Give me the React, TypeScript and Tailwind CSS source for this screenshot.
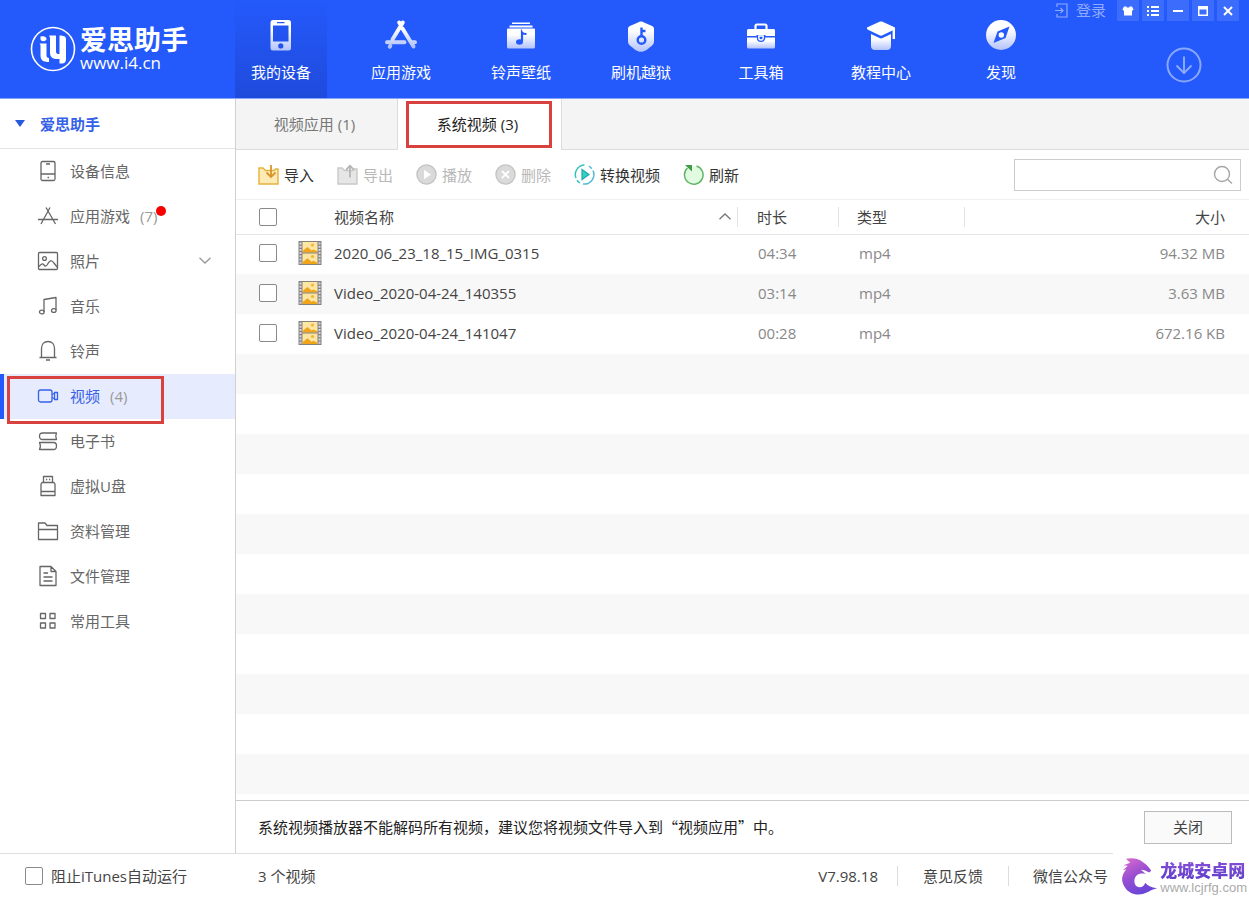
import React from 'react';
import clsx from 'clsx';

type IconProps = { className?: string };

/* ---------- header icons (white fading to light blue) ---------- */

const NavSvg = ({ children }: { children: React.ReactNode }) => (
  <svg viewBox="0 0 34 34" className="size-[34px]" fill="none" aria-hidden="true">
    {children}
  </svg>
);

const DeviceIcon = () => (
  <NavSvg>
    <path
      fillRule="evenodd"
      fill="url(#navFade)"
      d="M9 2h15.500a2.500 2.500 0 0 1 2.500 2.500v25.500a2.500 2.500 0 0 1-2.500 2.500H9a2.500 2.500 0 0 1-2.500-2.500V4.500A2.500 2.500 0 0 1 9 2zM9 7.500v16h15.500v-16zM16.800 25.300a2.600 2.600 0 1 0 0 5.200a2.600 2.600 0 1 0 0-5.200zM13 4v1.300h7.500V4z"
    />
  </NavSvg>
);

const AppsIcon = () => (
  <NavSvg>
    <g stroke="url(#navFadeStroke)" strokeWidth="4" strokeLinecap="round">
      <path d="M18.800 4.500L8.500 21.500M15.200 4.500L17 7.500M18.500 10.500L29.500 28.500M6.300 28l-.5.800M3 24.200H20.500M28 24.200h3" />
    </g>
  </NavSvg>
);

const RingtoneIcon = () => (
  <NavSvg>
    <path fill="#fff" d="M8 4.500h18V6H8zM5.500 7.500h23v2h-23z" />
    <path fill="url(#navFade)" d="M4 10.500h26a1 1 0 0 1 1 1V29a1.500 1.500 0 0 1-1.500 1.500h-25A1.500 1.500 0 0 1 3 29V11.500a1 1 0 0 1 1-1z" />
    <path d="M18 23.500V14.500c1 1.600 2.300 1.500 4.500 1.500" stroke="#2459fb" strokeWidth="2.200" />
    <ellipse cx="15.500" cy="24" rx="3.500" ry="2.800" fill="#2459fb" />
  </NavSvg>
);

const ShieldIcon = () => (
  <NavSvg>
    <path
      fill="url(#navFade)"
      d="M17 3.500c1 0 1.700.4 3 1l7.500 3.200c1.600.7 2.500 1.500 2.500 3.300v12c0 2.500-1 4-3 5.500-3 2.200-6 5.300-10 5.300s-7-3.100-10-5.300c-2-1.500-3-3-3-5.500V11c0-1.800.9-2.600 2.500-3.300L14 4.500c1.300-.6 2-1 3-1z"
    />
    <circle cx="17.500" cy="22" r="3.800" stroke="#2459fb" strokeWidth="2.400" />
    <path d="M17.500 18.500V9.500M17.500 13h4" stroke="#2459fb" strokeWidth="2.400" />
  </NavSvg>
);

const ToolboxIcon = () => (
  <NavSvg>
    <path d="M11.500 11V8a1.500 1.500 0 0 1 1.500-1.500h8a1.500 1.500 0 0 1 1.500 1.500v3" stroke="#fff" strokeWidth="2.200" />
    <path fill="#fff" d="M4.500 11h25a1.500 1.500 0 0 1 1.500 1.500V18h-9.500v-1h-9v1H3v-5.500A1.500 1.500 0 0 1 4.500 11z" />
    <path fill="url(#navFade)" d="M3 19.500h9.800c0 3 1.500 4.500 4.200 4.500s4.200-1.500 4.200-4.500H31V29a1.500 1.500 0 0 1-1.500 1.500h-25A1.500 1.500 0 0 1 3 29z" />
    <path d="M14.800 18h4.400v1.800a2.200 2.200 0 0 1-4.400 0z" stroke="#fff" strokeWidth="1.400" />
  </NavSvg>
);

const CourseIcon = () => (
  <NavSvg>
    <path
      fill="#fff"
      d="M15.500 3.800c1-.4 2-.4 3 0L30 9c1.500.7 1.500 2 0 2.800l-11.500 5.500c-1 .5-2 .5-3 0L4 11.800C2.500 11 2.500 9.700 4 9z"
    />
    <path fill="url(#navFade)" d="M7 16l8.500 4c1 .5 2 .5 3 0l8.500-4v12c0 2.500-1.500 4-4 4H11c-2.500 0-4-1.500-4-4z" />
    <path d="M29.800 11v10" stroke="#fff" strokeWidth="2.400" />
  </NavSvg>
);

const DiscoverIcon = () => (
  <NavSvg>
    <circle cx="17" cy="17" r="15" fill="url(#navFade)" />
    <path fill="#2459fb" d="M25.500 8.500l-4 11.500L9.500 25l4-11.500z" />
    <circle cx="17.300" cy="17" r="2.700" fill="#fff" />
  </NavSvg>
);

/* ---------- sidebar icons ---------- */

const LineSvg = ({ children }: { children: React.ReactNode }) => (
  <svg
    viewBox="0 0 22 22"
    className="size-[22px] shrink-0"
    fill="none"
    stroke="currentColor"
    strokeWidth="1.300"
    strokeLinejoin="round"
    aria-hidden="true"
  >
    {children}
  </svg>
);

const InfoLine = () => (
  <LineSvg>
    <rect x="4" y="1.500" width="14" height="19" rx="1.500" />
    <path d="M4 14h14M9 4h4M10.500 17.500h1.500" />
  </LineSvg>
);
const AppsLine = () => (
  <LineSvg>
    <path d="M13 2.500L4 19M9 2.500L18.500 19M1 14.500h20" />
  </LineSvg>
);
const PhotoLine = () => (
  <LineSvg>
    <rect x="1.500" y="2.500" width="19" height="17" rx="1" />
    <circle cx="7.500" cy="8.500" r="1.900" />
    <path d="M2 16.500c2-2.500 3.500-3.500 5-1.500 1 1.300 2 1.500 3 0 2.500-4.500 4.500-5.500 6.500-2.500l4 5" />
  </LineSvg>
);
const MusicLine = () => (
  <LineSvg>
    <path d="M7 17V4.500L19 2.500V15" />
    <ellipse cx="4.800" cy="17" rx="2.300" ry="1.900" />
    <ellipse cx="16.800" cy="15.500" rx="2.300" ry="1.900" />
  </LineSvg>
);
const BellLine = () => (
  <LineSvg>
    <path d="M2.500 17.500h17M4.500 17.500V8.500c0-4 2.500-7 6.500-7s6.500 3 6.500 7v9M9 20h4" />
  </LineSvg>
);
const VideoLine = () => (
  <LineSvg>
    <rect x="1.500" y="5" width="13.500" height="12" rx="2" />
    <path d="M15 9.500l2-1M15 12.500l2 1M17.500 7.500h3v7h-3z" />
  </LineSvg>
);
const BookLine = () => (
  <LineSvg>
    <path d="M19.500 3H5.500C3.500 3 2.500 4 2.500 6s1 3.500 3 3.500h14c-1-2-1-4.500 0-6.500zM2.500 12.500h14c2 0 3 1 3 3.500s-1 3.500-3 3.500h-14c1-2 1-5 0-7z" />
  </LineSvg>
);
const UsbLine = () => (
  <LineSvg>
    <path d="M6.500 7.500v-6h9v6M9 4.500h1.200M12 4.500h1.200" />
    <path d="M5 7.500h12l1 1.500v11.500H4V9zM4 16.500h14" />
  </LineSvg>
);
const FolderLine = () => (
  <LineSvg>
    <path d="M1.500 19.500v-16.500h6.500l2 2.500h10.500v14zM1.500 9.500h19" />
  </LineSvg>
);
const FileLine = () => (
  <LineSvg>
    <path d="M3 1.500h11l5 5v14H3zM14 1.500v5h5M6.500 8h4.500M6.500 12h9M6.500 16h9" />
  </LineSvg>
);
const GridLine = () => (
  <LineSvg>
    <rect x="3.500" y="3.500" width="5" height="5" />
    <rect x="13" y="3.500" width="5" height="5" />
    <rect x="3.500" y="13" width="5" height="5" />
    <rect x="13" y="13" width="5" height="5" />
  </LineSvg>
);

/* ---------- toolbar icons ---------- */

const TrayIcon = ({ up, stroke, fill, arrow }: { up?: boolean; stroke: string; fill: string; arrow: string }) => (
  <svg viewBox="0 0 21 21" className="size-[21px]" fill="none" aria-hidden="true">
    <path d="M1 20V4h4l2.500 2.500H16L17.500 5H20v15z" fill={fill} stroke={stroke} strokeWidth="1.400" />
    {up ? (
      <path d="M13 13.500V2M9 5.800l4-4 4 4" stroke={arrow} strokeWidth="1.700" />
    ) : (
      <path d="M13 1v12M8.500 8.500L13 13l4.500-4.500" stroke={arrow} strokeWidth="1.800" />
    )}
  </svg>
);

const ImportIcon = () => <TrayIcon stroke="#e5b23c" fill="#fdeab4" arrow="#d9952a" />;
const ExportIcon = () => <TrayIcon up stroke="#c8c8c8" fill="#e6e6e6" arrow="#b4b4b4" />;

const PlayIcon = () => (
  <svg viewBox="0 0 21 21" className="size-[21px]" aria-hidden="true">
    <circle cx="10.500" cy="10.500" r="9.600" fill="#dadada" stroke="#c2c2c2" strokeWidth="1.300" />
    <path d="M8 5.800l7 4.700-7 4.700z" fill="#fff" />
  </svg>
);

const RemoveIcon = () => (
  <svg viewBox="0 0 21 21" className="size-[21px]" aria-hidden="true">
    <circle cx="10.500" cy="10.500" r="9.600" fill="#dadada" stroke="#c2c2c2" strokeWidth="1.300" />
    <path d="M7 7l7 7M14 7l-7 7" stroke="#fff" strokeWidth="1.800" />
  </svg>
);

const ConvertIcon = () => (
  <svg viewBox="0 0 21 21" className="size-[21px]" fill="none" aria-hidden="true">
    <path d="M10.500 1A9.500 9.500 0 0 0 2 14M3 16.200a9.500 9.500 0 0 0 3 2.700" stroke="#35c3bd" strokeWidth="1.500" />
    <path d="M9 19.900A9.500 9.500 0 0 0 19 6.500M17.800 4.700a9.500 9.500 0 0 0-3-2.600" stroke="#58bcd8" strokeWidth="1.500" />
    <path d="M8 5.500l7 5-7 5z" fill="#35d0bf" stroke="#1fa8b4" strokeWidth="1.200" />
  </svg>
);

const RefreshIcon = () => (
  <svg viewBox="0 0 21 21" className="size-[21px]" fill="none" aria-hidden="true">
    <circle cx="10.500" cy="11" r="9" fill="#e0fbe0" />
    <path d="M13.500 2a9.300 9.300 0 1 1-9 2" stroke="#62b568" strokeWidth="1.500" />
    <path d="M2 1h7v6.500z" fill="#3f9c47" />
  </svg>
);

const FilmIcon = () => (
  <svg viewBox="0 0 24 24" className="size-6" aria-hidden="true">
    <rect x="0.500" y="0" width="23" height="24" fill="#85827c" />
    <path d="M2.500 1.500v22M21.500 1.500v22" stroke="#d4d4ea" strokeWidth="2" strokeDasharray="2 1.200" />
    <rect x="4.500" y="1" width="15" height="10.300" fill="#fde6a2" />
    <rect x="4.500" y="12.500" width="15" height="10.500" fill="#fde6a2" />
    <path d="M4.500 11.300V10l5-4 4 3.500 2-1 4 2v.8zM4.500 23v-1.800l5-4 4 3.500 2-1 4 2V23z" fill="#f0a41c" />
    <circle cx="14.500" cy="4" r="1.600" fill="#f4b53a" />
    <circle cx="14.500" cy="15.500" r="1.600" fill="#f4b53a" />
  </svg>
);

const SearchIcon = () => (
  <svg viewBox="0 0 20 20" className="size-5" fill="none" stroke="#a5a5a5" strokeWidth="1.400" aria-hidden="true">
    <circle cx="9" cy="9" r="7.500" />
    <path d="M14.300 14.300L19 18.500" />
  </svg>
);

const Chevron = ({ className }: IconProps) => (
  <svg viewBox="0 0 12 7" className={clsx('h-[7px] w-3', className)} fill="none" stroke="currentColor" strokeWidth="1.300" aria-hidden="true">
    <path d="M.5.800L6 6 11.500.800" />
  </svg>
);

const BrandMark = () => (
  <svg viewBox="0 0 46 46" className="size-[46px]" fill="none" aria-hidden="true">
    <circle cx="23" cy="23" r="21.500" stroke="#fff" strokeWidth="1.600" />
    <path fill="#fff" d="M10.500 10.500c3-.8 6-.3 6 2.500s-6 3-6 0z" />
    <path
      fill="#fff"
      d="M9.500 17.500h7v12c0 1.500.8 2.500 2.500 2.500v4c-6 0-8.500-2-8.500-6.500v-9.500c0-1.200-.3-2-1-2.500zM19 9.500h7v16c0 1.500.8 2.500 2 2.500h1.500V9.500c4.500 0 6.500 1 6.500 3.500v20c0 3-1.500 4.500-4 4.500h-2.500V33H27c-4.500 0-7-2-7-6.500V13c0-1.500-.2-2.500-1-3.500z"
    />
  </svg>
);

/* ---------- data ---------- */

const navItems = [
  { label: '我的设备', Icon: DeviceIcon, active: true },
  { label: '应用游戏', Icon: AppsIcon },
  { label: '铃声壁纸', Icon: RingtoneIcon },
  { label: '刷机越狱', Icon: ShieldIcon },
  { label: '工具箱', Icon: ToolboxIcon },
  { label: '教程中心', Icon: CourseIcon },
  { label: '发现', Icon: DiscoverIcon },
];

const sideItems = [
  { label: '设备信息', Icon: InfoLine },
  { label: '应用游戏', Icon: AppsLine, count: 7, dot: true },
  { label: '照片', Icon: PhotoLine, expandable: true },
  { label: '音乐', Icon: MusicLine },
  { label: '铃声', Icon: BellLine },
  { label: '视频', Icon: VideoLine, count: 4, active: true },
  { label: '电子书', Icon: BookLine },
  { label: '虚拟U盘', Icon: UsbLine },
  { label: '资料管理', Icon: FolderLine },
  { label: '文件管理', Icon: FileLine },
  { label: '常用工具', Icon: GridLine },
];

const tools = [
  { label: '导入', Icon: ImportIcon },
  { label: '导出', Icon: ExportIcon, disabled: true },
  { label: '播放', Icon: PlayIcon, disabled: true },
  { label: '删除', Icon: RemoveIcon, disabled: true },
  { label: '转换视频', Icon: ConvertIcon },
  { label: '刷新', Icon: RefreshIcon },
];

const videos = [
  { name: '2020_06_23_18_15_IMG_0315', duration: '04:34', type: 'mp4', size: '94.32 MB' },
  { name: 'Video_2020-04-24_140355', duration: '03:14', type: 'mp4', size: '3.63 MB' },
  { name: 'Video_2020-04-24_141047', duration: '00:28', type: 'mp4', size: '672.16 KB' },
];

const windowButtons = [
  { label: '皮肤', d: 'M3 2.500h2.200a2 2 0 0 0 3.600 0H11l1.500 3-1.500 1.500v4.500H3V7L1.500 5.500z', filled: true },
  { label: '菜单', d: 'M1 3h2M5 3h8M1 7h2M5 7h8M1 11h2M5 11h8' },
  { label: '最小化', d: 'M2 7h10' },
  { label: '最大化', d: 'M2 2h10v10H2zM3.500 5.500v5h7v-5z', filled: true },
  { label: '关闭窗口', d: 'M3 3l8 8M11 3l-8 8' },
];

/* ---------- parts ---------- */

const Checkbox = ({ label, id }: { label: string; id?: string }) => (
  <input
    type="checkbox"
    id={id}
    aria-label={id ? undefined : label}
    className="block size-[18px] shrink-0 appearance-none rounded-[2px] border border-[#8a8a8a] bg-white checked:bg-[#2459fb]"
  />
);

const Header = () => (
  <header className="flex h-[99px] shrink-0 border-b border-[#86a3fb] bg-[#2459fb] text-white">
    <svg className="absolute size-0" aria-hidden="true">
      <defs>
        <linearGradient id="navFade" x1="0" y1="0" x2="0" y2="1">
          <stop offset="0.300" stopColor="#fff" />
          <stop offset="1" stopColor="#b3c3fc" />
        </linearGradient>
        <linearGradient id="navFadeStroke" gradientUnits="userSpaceOnUse" x1="0" y1="2" x2="0" y2="32">
          <stop offset="0.300" stopColor="#fff" />
          <stop offset="1" stopColor="#a3b7fc" />
        </linearGradient>
      </defs>
    </svg>

    <a href="#home" className="flex w-[235px] shrink-0 items-center gap-1 pl-[30px]">
      <BrandMark />
      <span className="flex flex-col">
        <span className="text-[27px] leading-[28px] font-bold">爱思助手</span>
        <span className="text-[17px] leading-[18px]">www.i4.cn</span>
      </span>
    </a>

    <nav className="flex gap-7">
      {navItems.map(({ label, Icon, active }) => (
        <a
          key={label}
          href={`#${label}`}
          className={clsx(
            'flex w-[92px] flex-col items-center gap-2 pt-[18px] leading-6',
            active && 'bg-linear-to-b from-[#2459fb] to-[#1f4bdc]',
          )}
        >
          <Icon />
          {label}
        </a>
      ))}
    </nav>

    <div className="ml-auto flex flex-col items-end gap-[26px] pr-2.5">
      <div className="flex items-center gap-[3px]">
        <button type="button" className="mr-2 flex items-center gap-2 text-[#8fabff]">
          <svg viewBox="0 0 13 15" className="h-[15px] w-[13px]" fill="none" stroke="currentColor" strokeWidth="1.200" aria-hidden="true">
            <path d="M2 4V1h10v13H2v-3M0 7.500h8M5.500 5L8 7.500 5.500 10" />
          </svg>
          <span className="leading-[21px]">登录</span>
        </button>
        {windowButtons.map(({ label, d, filled }) => (
          <button key={label} type="button" aria-label={label} className="flex h-[21px] w-[22px] items-center justify-center bg-[#3c6cfc]">
            <svg
              viewBox="0 0 14 14"
              className="size-3.5"
              fill={filled ? 'currentColor' : 'none'}
              fillRule="evenodd"
              stroke="currentColor"
              strokeWidth={filled ? 0 : 2}
              aria-hidden="true"
            >
              <path d={d} />
            </svg>
          </button>
        ))}
      </div>
      <button type="button" aria-label="下载" className="mr-[37px] text-[#8aa8fe]">
        <svg viewBox="0 0 36 36" className="size-9" fill="none" stroke="currentColor" strokeWidth="2" aria-hidden="true">
          <circle cx="18" cy="18" r="16.500" />
          <path d="M18 9.500v16M10.500 18.500l7.500 7.500 7.500-7.500" />
        </svg>
      </button>
    </div>
  </header>
);

const Sidebar = () => (
  <aside className="w-[236px] shrink-0 border-r border-[#d0d0d0]">
    <button type="button" className="flex h-[50px] w-full items-center gap-[15px] border-b border-[#e4e4e4] pl-[15px] font-bold text-[#3561e8]">
      <svg viewBox="0 0 10 7" className="h-[7px] w-2.5" fill="#2459e0" aria-hidden="true">
        <path d="M0 0h10L5 7z" />
      </svg>
      爱思助手
    </button>
    <nav>
      {sideItems.map(({ label, Icon, count, dot, expandable, active }) => (
        <a
          key={label}
          href={`#side-${label}`}
          className={clsx(
            'relative flex h-[45px] items-center border-l-4 pb-0.5 pl-[33px]',
            active ? 'border-[#2459fb] bg-[#e7ebfe] text-[#3561e8]' : 'border-transparent text-[#666]',
          )}
        >
          <Icon />
          <span className="ml-[11px]">{label}</span>
          {count && <span className="ml-2.5 text-[#999]">({count})</span>}
          {dot && <span className="-ml-px mb-2.5 size-2.5 rounded-full bg-[#f80000]" />}
          {expandable && <Chevron className="mr-6 ml-auto text-[#999]" />}
          {active && <span className="absolute top-0.5 left-[3px] h-12 w-[157px] border-3 border-[#d9413f]" />}
        </a>
      ))}
    </nav>
  </aside>
);

const Tabs = () => (
  <div role="tablist" className="flex h-[51px] shrink-0">
    <button type="button" role="tab" aria-selected="false" className="w-[162px] border-r border-b border-[#dcdcdc] bg-[#f4f4f4] pr-1 text-[#777]">
      视频应用 (1)
    </button>
    <button type="button" role="tab" aria-selected="true" className="relative w-[163px] pr-1 pb-0.5 text-[#222]">
      系统视频 (3)
      <span className="absolute top-0.5 left-2 h-[47px] w-[146px] border-3 border-[#d9413f]" />
    </button>
    <div className="flex-1 border-b border-l border-[#dcdcdc] bg-[#f4f4f4]" />
  </div>
);

const Toolbar = () => (
  <div className="flex h-[50px] shrink-0 items-center gap-[23px] border-b border-[#f0f0f0] pr-2 pl-[22px]">
    {tools.map(({ label, Icon, disabled }) => (
      <button
        key={label}
        type="button"
        disabled={disabled}
        className={clsx('flex items-center gap-[5px] whitespace-nowrap', disabled ? 'text-[#b8b8b8]' : 'text-[#333]')}
      >
        <Icon />
        {label}
      </button>
    ))}
    <label className="ml-auto flex h-8 w-[227px] items-center border border-[#ccc] pr-[7px]">
      <input type="text" aria-label="搜索" className="h-full min-w-0 flex-1 px-2 outline-none" />
      <SearchIcon />
    </label>
  </div>
);

const VideoTable = () => (
  <table className="w-full table-fixed text-left">
    <thead>
      <tr className="h-[34px] border-b border-[#e6e6e6] text-[#444]">
        <th className="w-[62px] pl-[23px]">
          <Checkbox label="全选" />
        </th>
        <th className="p-0 font-normal">
          <div className="flex h-5 items-center justify-between border-r border-[#e2e2e2] pr-1.5 pl-9">
            视频名称
            <Chevron className="rotate-180 text-[#777]" />
          </div>
        </th>
        <th className="w-[101px] p-0 font-normal">
          <div className="flex h-5 items-center border-r border-[#e2e2e2] pl-[19px]">时长</div>
        </th>
        <th className="w-[126px] p-0 font-normal">
          <div className="flex h-5 items-center border-r border-[#e2e2e2] pl-[18px]">类型</div>
        </th>
        <th className="w-[284px] pr-6 text-right font-normal">大小</th>
      </tr>
    </thead>
    <tbody>
      {videos.map(({ name, duration, type, size }) => (
        <tr key={name} className="h-10 text-[#888] even:bg-[#f8f8f8]">
          <td className="pb-0.5 pl-[23px]">
            <Checkbox label={name} />
          </td>
          <td className="pb-0.5">
            <div className="flex items-center gap-3 text-[#444]">
              <FilmIcon />
              {name}
            </div>
          </td>
          <td className="pb-0.5 pl-5">{duration}</td>
          <td className="pb-0.5 pl-5">{type}</td>
          <td className="pr-6 pb-0.5 text-right">{size}</td>
        </tr>
      ))}
    </tbody>
  </table>
);

const SiteBadge = () => (
  <div className="absolute -top-0.5 right-0 flex items-center gap-0.5 bg-white pt-1.5 pr-0.5 pl-2">
    <svg viewBox="0 0 38 38" className="size-[37px]" aria-hidden="true">
      <defs>
        <linearGradient id="dragon" x1="0" y1="0" x2="0.500" y2="1">
          <stop offset="0" stopColor="#e06bd0" />
          <stop offset="0.500" stopColor="#9a4fd0" />
          <stop offset="1" stopColor="#6a45d8" />
        </linearGradient>
      </defs>
      <path
        fill="url(#dragon)"
        d="M5 .800c7-1.300 13-.3 18 3.700 4 3 6.500 5.500 8 8.500l-2 2c-3-2-5.500-3-8.500-3l5 4.500c-4-1-7-.5-9.500 1.500-3 3-3 8.500 0 11 3 2 7 1.500 9-3.500 2 3 6 5 12 5.500-5 1-7.500 3-10.500 4.500-7 3.500-16.500 2.500-21.500-4C0 25.500-.5 18 5.500 11.500L2 12.500l5-4.500-4.500-.5L9.500 5z"
      />
    </svg>
    <div className="flex flex-col">
      <span className="bg-linear-to-b from-[#8a50d8] to-[#5a3cc8] bg-clip-text text-[17px] leading-[22px] font-black text-transparent">龙城安卓网</span>
      <span className="font-['Liberation_Sans',sans-serif] text-[13px] leading-3 text-[#aaa]">www.lcjrfg.com</span>
    </div>
  </div>
);

const Footer = () => (
  <footer className="relative flex h-[45px] shrink-0 items-center border-t border-[#dedede] text-[#444]">
    <div className="flex w-[258px] shrink-0 items-center gap-2 pl-[25px]">
      <Checkbox label="阻止iTunes自动运行" id="block-itunes" />
      <label htmlFor="block-itunes">阻止iTunes自动运行</label>
    </div>
    <span>3 个视频</span>
    <div className="mr-[141px] ml-auto flex items-center">
      <span className="pr-[19px]">V7.98.18</span>
      <a href="#feedback" className="border-x border-[#dcdcdc] px-[25px] leading-5">
        意见反馈
      </a>
      <a href="#wechat" className="pl-6">
        微信公众号
      </a>
    </div>
    <SiteBadge />
  </footer>
);

const App = () => (
  <div className="flex min-h-screen flex-col bg-white font-['Open_Sans','Noto_Sans_CJK_SC',sans-serif] text-[15px] leading-[22px]">
    <Header />
    <div className="flex flex-1">
      <Sidebar />
      <main className="flex min-w-0 flex-1 flex-col">
        <Tabs />
        <Toolbar />
        <VideoTable />
        {/* empty list area keeps the row striping */}
        <div className="flex-1 bg-[repeating-linear-gradient(to_bottom,#f8f8f8_0_40px,#fff_40px_80px)]" />
        <div className="flex h-[53px] shrink-0 items-center justify-between border-t border-[#ccc] pr-[17px] pl-[22px] text-[#222]">
          <p lang="zh-CN" className="font-['Noto_Sans_CJK_SC',sans-serif]">
            系统视频播放器不能解码所有视频，建议您将视频文件导入到“视频应用”中。
          </p>
          <button type="button" className="h-[33px] w-[88px] border border-[#bbb] bg-[#fafafa] text-[#444]">
            关闭
          </button>
        </div>
      </main>
    </div>
    <Footer />
  </div>
);

export default App;
